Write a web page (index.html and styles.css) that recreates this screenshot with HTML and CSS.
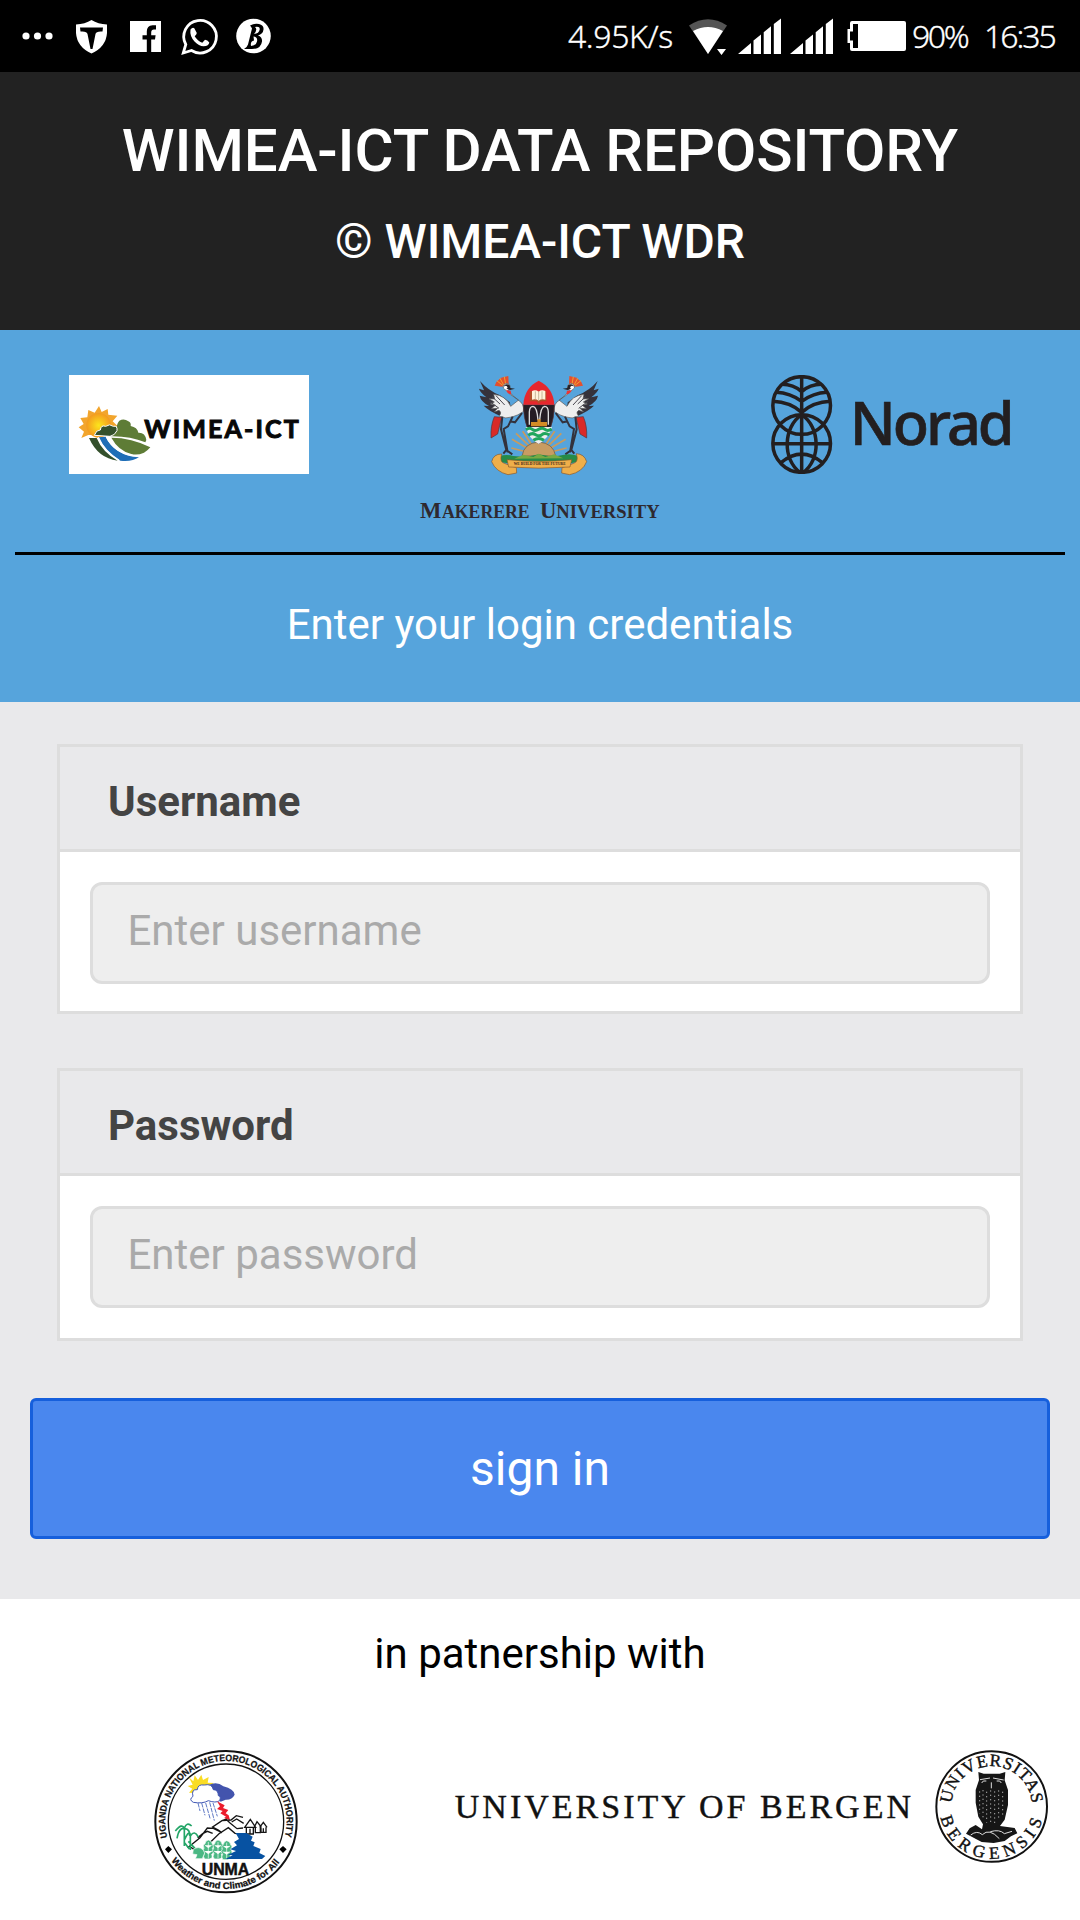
FILE: index.html
```html
<!DOCTYPE html>
<html lang="en">
<head>
<meta charset="utf-8">
<title>WIMEA-ICT Data Repository</title>
<link rel="stylesheet" href="styles.css">
</head>
<body>
<div class="status">
  <svg class="status-left" viewBox="0 0 280 72" width="280" height="72">
    <g fill="#fff">
      <circle cx="26" cy="36" r="3.6"/><circle cx="37.5" cy="36" r="3.6"/><circle cx="49" cy="36" r="3.6"/>
      <path d="M76 24.5Q85 24 91.500 20Q98 24 107 24.500V33Q106 47 91.500 53.500Q77 47 76 33Z"/>
      <path fill="#000" d="M80 27.500H103L102.500 31.500Q96 31 95.500 34L92.500 49H90.500L87.500 34Q87 31 80.500 31.500Z"/>
      <path d="M130 21H161V52H151.200V39.500H155L155.600 35.300H151.200V32.500Q151.200 29.500 154 29.500H156V25.200H152.500Q146.800 25.500 146.800 31.500V35.300H142.500V39.500H146.800V52H130Z"/>
      <path d="M190.500 29.500Q192.500 27 194.300 28.300L196.800 33Q196.500 35 194.700 36.300Q197.500 41 202.300 42.800L205 39.800Q207.500 40 209.300 42.500Q209 46 203.500 46.300Q199 46 194.500 41.500Q189.500 36 190.500 29.500Z"/>
      <circle cx="253.500" cy="36" r="17.300"/>
    </g>
    <path fill="none" stroke="#fff" stroke-width="2.800" stroke-linejoin="miter" d="M183.300 53L185.800 44.500A16.300 16.300 0 1 1 191.500 50.500Z"/>
    <g transform="translate(244 23.500)">
      <path d="M6 2Q11-.5 15 .500Q20 1.500 19.500 6Q19 10.500 14 12Q18.500 13.500 18 18Q17 25.500 8 25.500H0Q3 24 4 21L8 5Q7 3 6 2Z"/>
      <path fill="#fff" d="M11 3.500Q16 2.500 15.700 6Q15 10 10 10.500Q14 6 11 3.500ZM9.500 13Q14 13.500 13 18Q12 22.500 7 22.500Q6 18 10 17Z"/>
    </g>
  </svg>
  <span class="speed">4.95K/s</span>
  <svg class="signals" viewBox="689 0 218 72" width="218" height="72" fill="#fff">
    <path fill="#555" d="M689 25.500Q708 13 727 25.500L708 54Z"/>
    <path d="M693 31Q708 23 723 31L708 54ZM717 49H726L721.500 55Z"/>
    <g id="bars"><path d="M738 54L751 43V54ZM753.500 40.500L761 34.500V54H753.500ZM763.700 32.300L771 26.300V54H763.700ZM773.800 24L781 18.500V54H773.800Z"/></g>
    <use href="#bars" x="52"/>
    <path d="M852 21H904Q906 21 906 23V49Q906 51 904 51H852Q850 51 850 49V43H847.500V29H850V23Q850 21 852 21Z"/>
    <path fill="#000" d="M853 24H858V48H853V40.500H850V31.500H853Z"/>
  </svg>
  <span class="percent">90%</span>
  <span class="clock">16:35</span>
</div>

<header class="header">
  <h1>WIMEA-ICT DATA REPOSITORY</h1>
  <h2>© WIMEA-ICT WDR</h2>
</header>

<section class="banner">
  <div class="logos">
    <svg viewBox="57 45 720 297" width="240" height="99">
      <defs><radialGradient id="sun"><stop offset="0" stop-color="#fce51c"/><stop offset="1" stop-color="#f39a1f"/></radialGradient></defs>
      <path fill="#fff" d="M57 45H777V342H57Z"/>
      <path fill="#f2a52d" d="M147 138L155 156L173 147L175 164L202 167L188 184L202 197L185 208L180 225H115L94 234L102 215L86 202L101 192L91 174L112 172L115 150L134 158Z"/>
      <circle cx="146" cy="196" r="37" fill="url(#sun)"/>
      <path fill="#5e7c36" d="M183 229L201 211Q198 193 208 182Q222 174 235 184Q244 188 242 198Q262 202 265 218Q286 217 289 240L286 247Q240 228 183 229Z"/>
      <path fill="#5e7c36" d="M184 233Q245 233 301 262Q292 273 282 278Q262 287 244 282Q205 272 184 233Z"/>
      <path fill="#34502c" stroke="#fff" stroke-width="3" d="M133 226Q139 209 151 210Q153 194 167 199Q179 190 190 199Q203 196 201 212Q195 226 180 229Z"/>
      <path fill="#34502c" d="M117 234H140Q157 276 203 302Q144 295 117 234Z"/>
      <path fill="#1f6eb7" d="M145 232L167 230Q193 286 267 292Q246 306 211 302Q166 276 145 232Z"/>
      <path fill="none" stroke="#fff" stroke-width="4" d="M169 230Q192 277 250 287M145 232Q163 274 207 301"/>
      <text class="wimea-word" x="283" y="235" textLength="463">WIMEA-ICT</text>
    </svg>

    <svg class="crest" viewBox="30 45 720 432" width="240" height="144">
      <g stroke="#c99b5d" stroke-width="5"><path d="M386 285L304 264M386 285L306 238M386 285L318 220M386 285L338 214M386 285L470 264M386 285L467 238M386 285L454 220M386 285L434 214"/></g>
      <path fill="#c89c62" stroke="#654" stroke-width="2" d="M336 288Q342 249 386 246Q430 249 437 288Z"/>
      <g id="crane">
        <path fill="#e4502e" d="M275 80L254 77Q260 53 295 48L296 74Z"/>
        <path stroke="#f2a02f" stroke-width="3" d="M260 62L278 76M270 55L281 75M283 50L287 73"/>
        <path fill="#d92a28" stroke="#54343b" stroke-width="2" d="M253 170L275 172L263 222L243 234Q241 198 253 170Z"/>
        <path fill="#35323b" d="M210 63Q235 92 270 106L300 127L303 165L276 170Q236 153 221 137L237 138Q212 124 209 107L229 112Q208 94 207 86L222 91Z"/>
        <path fill="#eee" stroke="#555" stroke-width="2" d="M251 103Q287 106 302 139L326 120Q299 105 280 84Q278 71 291 70Q303 74 300 86L293 91Q305 105 324 120Q344 131 340 155Q324 166 306 171Q286 178 267 168Q277 158 267 151L252 156L263 145L244 146L256 136L241 132L253 126L237 116L254 117Z"/>
        <path d="M282 77Q290 69 299 76L301 84L315 86L300 90L286 84Z" fill="#26242b"/>
        <circle cx="287" cy="82" r="5" fill="#fff"/><path fill="#e33" d="M288 91L302 92L304 103Q293 103 288 91Z"/>
        <path fill="none" stroke="#33323c" stroke-width="6" d="M277 170L273 208L289 270L280 281M289 270L307 283M308 170L294 199L281 207L293 277M336 159L315 187L300 184"/>
        <path fill="none" stroke="#4b4951" stroke-width="3" d="M246 110L270 132M239 124L267 145M258 107L284 135"/>
      </g>
      <use href="#crane" transform="translate(773 0) scale(-1 1)"/>
      <path fill="#258b47" d="M247 303Q275 278 309 288L348 291L386 283L429 290L463 284Q498 278 526 302L480 310H295Z"/>
      <path fill="#78a943" d="M313 296L340 284L370 291L386 281L406 291L432 283L460 295Z"/>
      <path fill="#251d24" stroke="#57343a" stroke-width="2" d="M340 134H433Q433 215 386 252Q341 215 340 134Z"/>
      <path fill="#e7272d" d="M340 134Q343 83 386 62Q430 83 433 134Z"/>
      <path fill="#b45028" d="M359 94H409V124H393L386 132L380 124H359Z"/><path fill="#fff3da" d="M366 93Q377 88 386 95Q395 88 406 93V119Q395 115 386 122Q377 115 366 119Z"/>
      <path stroke="#a97" stroke-width="2" d="M386 95V121M376 94V118M396 94V118"/>
      <path fill="none" stroke="#ddd" stroke-width="4" d="M358 194V156Q359 139 369 139Q381 140 384 180M415 194V156Q414 139 404 139Q392 140 389 180"/>
      <path fill="#d48c26" d="M363 186H382V178H392V186H411V199H363Z"/>
      <path fill="#eee" d="M347 201H426Q416 235 386 252Q355 235 347 201Z"/>
      <path fill="none" stroke="#21a65d" stroke-width="9" d="M348 209Q359 201 367 208T386 208T405 208T425 207M355 226Q366 217 377 224T396 224T418 225M370 241Q386 230 402 241"/>
      <g fill="#efaf4a" stroke="#89572b" stroke-width="2"><path d="M275 282Q250 282 245 305Q257 335 294 344L320 339L319 323L283 310Q268 306 275 282ZM499 281Q523 282 530 305Q518 336 479 344L455 339L456 323L491 310Q507 305 499 281Z"/><path d="M291 299Q387 309 485 299L480 321Q386 328 296 321Z"/></g>
      <text class="motto" x="311" y="314" textLength="156" lengthAdjust="spacingAndGlyphs">WE BUILD FOR THE FUTURE</text>
      <text class="makerere" y="473"><tspan x="30" font-size="68">M</tspan><tspan x="96" font-size="57" textLength="263" lengthAdjust="spacingAndGlyphs">AKERERE</tspan><tspan x="390" font-size="68">U</tspan><tspan x="439" font-size="57" textLength="310" lengthAdjust="spacingAndGlyphs">NIVERSITY</tspan></text>
    </svg>

    <svg viewBox="63 45 720 297" width="240" height="99">
      <g fill="none" stroke="#231f20" stroke-width="10.500">
        <circle cx="155" cy="136.500" r="86.500"/>
        <circle cx="155" cy="250.500" r="86.500"/>
        <path d="M155 47V338M68 251H242M96 73Q130 73 155 95Q180 73 214 73M79 97Q120 99 155 124Q190 99 231 97M69 124Q120 126 155 157Q190 126 241 124M155 164C98 202 98 300 150 337M155 164C212 202 212 300 160 337M93 308Q155 257 217 308"/>
      </g>
      <text class="norad" x="299" y="256" textLength="495">Norad</text>
    </svg>
  </div>
  <hr>
  <p>Enter your login credentials</p>
</section>

<form class="form">
  <div class="card">
    <label for="username">Username</label>
    <div class="field"><input id="username" type="text" placeholder="Enter username"></div>
  </div>
  <div class="card card-last">
    <label for="password">Password</label>
    <div class="field"><input id="password" type="password" placeholder="Enter password"></div>
  </div>
  <button type="button">sign in</button>
</form>

<footer class="footer">
  <p>in patnership with</p>
  <div class="partners">
    <svg viewBox="42 32 432 432" width="144" height="144">
      <defs>
        <path id="unma-top" d="M82.200 294.100A182 182 0 1 1 433.800 294.100"/>
        <path id="unma-bottom" d="M93.700 364.300A202 202 0 0 0 422.300 364.300"/>
      </defs>
      <circle cx="258" cy="247" r="212" fill="#fff" stroke="#111" stroke-width="6"/>
      <circle cx="258" cy="247" r="173" fill="none" stroke="#111" stroke-width="4"/>
      <text class="ring"><textPath href="#unma-top" textLength="664" lengthAdjust="spacingAndGlyphs">UGANDA NATIONAL METEOROLOGICAL AUTHORITY</textPath></text>
      <path d="M85 320L96 330L85 341L75 330ZM429 320L440 330L429 341L418 330Z"/>
      <path fill="#fadc24" d="M146 113L160 126L164 108L174 122L184 106L189 122L206 113L203 130L222 131L190 150L160 161L147 160L157 148L143 140L158 136Z"/>
      <path fill="#4354ad" d="M205 138Q230 124 250 141Q282 149 284 166Q276 182 257 181L242 187L216 162Z"/>
      <path fill="#fff" stroke="#4057b4" stroke-width="3" d="M160 189Q145 181 159 171Q153 149 172 151Q173 134 193 137Q216 132 220 151Q235 151 235 169Q244 171 239 184Q227 192 205 184Q188 194 160 189Z"/>
      <path fill="none" stroke="#5f79c5" stroke-width="3" stroke-dasharray="14 3" d="M174 191L180 215M185 191L195 228M197 191L211 240M209 189L223 244M219 191L232 231"/>
      <path fill="#ec1c2c" d="M231 186L254 198L249 206L265 212L257 222L266 228L270 243L252 236L258 232L241 222L248 215L231 209L240 201Z"/>
      <path fill="none" stroke="#151515" stroke-width="4" d="M143 325L180 295L202 266L220 267L246 280L235 272L218 263L246 244L258 240L271 252L291 268L309 266M173 295L188 283L202 276L218 282M211 309L237 283L265 265L285 282L307 284M246 244L273 242L289 229L309 234M275 248L290 239L311 252M151 323L162 330"/>
      <g fill="none" stroke="#151515" stroke-width="4"><path d="M314 264L331 240L347 264ZM319 264V284H340V264M330 284V268M343 263L351 247L364 263M346 263V280H361V263M359 264L370 249L381 264M363 264V279H378V264M370 279V267"/></g>
      <g fill="none" stroke="#23a567" stroke-width="5"><path d="M133 320V266M106 275Q126 250 133 267Q140 246 155 260M111 297Q118 262 134 268Q151 270 149 290M115 280Q125 264 133 268M151 332V289M134 300Q148 269 152 289Q163 271 175 293M145 306L165 327M132 308L148 329"/></g>
      <g fill="#4bb884" stroke="#fff" stroke-width="2">
        <path id="bush" d="M205 302Q216 304 217 314Q225 320 217 328Q226 338 215 345Q220 357 208 359H194Q187 351 193 343Q184 335 192 327Q187 317 195 313Q196 304 205 302ZM205 308V357M195 318L205 325L215 318M193 335L205 343L216 335"/>
        <use href="#bush" x="29"/><use href="#bush" x="55" y="2"/><path d="M160 330Q175 319 189 331L194 341L187 358H166L171 346L158 344Z"/>
      </g>
      <path fill="#0752a2" d="M287 281H319L338 292L333 304L344 309L340 320L362 329L358 341L376 350L366 359H256L278 348L263 347L288 335L271 330L291 318L282 308L297 299Z"/>
      <text class="unma" x="185" y="406" textLength="143" lengthAdjust="spacingAndGlyphs">UNMA</text>
      <text class="ring"><textPath href="#unma-bottom" textLength="378" lengthAdjust="spacingAndGlyphs">Weather and Climate for All</textPath></text>
    </svg>
    <div class="bergen">
      <span>UNIVERSITY OF BERGEN</span>
      <svg viewBox="44 30 342 342" width="114" height="114">
        <defs>
          <path id="seal-top" d="M93.300 191A121 121 0 0 1 334.700 191"/>
          <path id="seal-bottom" d="M60.500 232A157 157 0 0 0 367.500 232"/>
        </defs>
        <circle cx="214" cy="199.500" r="166" fill="#fff" stroke="#111" stroke-width="6"/>
        <text class="seal"><textPath href="#seal-top" textLength="362">UNIVERSITAS</textPath></text>
        <text class="seal"><textPath href="#seal-bottom" textLength="418">BERGENSIS</textPath></text>
        <path fill="#161616" d="M174 96L190 101H238L255 96L253 121L263 150V195L253 239L239 258L283 264L291 280L272 289L253 303L220 309L184 306L137 281L148 265L166 255L185 268L188 253L174 230L166 188V150L176 120Z"/>
        <g fill="none" stroke="#ddd" stroke-width="3"><path d="M184 129Q187 120 198 123M229 123Q240 120 243 129M213 127V145M179 119L209 114M218 114L250 120M151 285Q170 270 186 284Q207 263 237 296M210 275Q238 267 252 281L275 274"/></g>
        <path fill="none" stroke="#aaa" stroke-width="3" stroke-dasharray="4 9" d="M178 154V220M188 150V238M199 155V248M211 151V250M223 154V250M235 151V240M247 155V225"/>
      </svg>
    </div>
  </div>
</footer>
</body>
</html>
```
FILE: styles.css
```css
* { box-sizing: border-box; }
body { margin: 0; width: 1080px; height: 1920px; overflow: hidden; background: #fff; font-family: Roboto, sans-serif; font-size: 42px; color: #000; }
svg { display: block; flex: none; }
h1, h2, p { margin: 0; }

.status { height: 72px; background: #000; color: #fff; display: flex; align-items: center; font: 300 32px/74px "Noto Sans", sans-serif; }
.status span { white-space: nowrap; -webkit-text-stroke: 0.3px #fff; }
.speed { margin-left: 288px; width: 121px; letter-spacing: -0.4px; }
.percent { margin-left: 5px; width: 72px; letter-spacing: -2.4px; }
.clock { letter-spacing: -2px; }

.header { height: 258px; background: #222; color: #fff; text-align: center; padding-top: 44px; }
.header h1 { font-size: 60px; font-weight: 500; line-height: 70px; letter-spacing: -0.1px; }
.header h2 { font-size: 48px; font-weight: 500; line-height: 56px; margin-top: 28px; letter-spacing: -0.06px; }

.banner { height: 372px; background: #56a4dc; color: #fff; padding: 45px 15px 0; text-align: center; }
.logos { height: 177px; padding: 0 54px; display: flex; justify-content: space-between; align-items: flex-start; }
.banner hr { margin: 0; border: 0; height: 3px; background: #000; }
.banner p { margin-top: 45px; line-height: 50px; }
.crest { overflow: visible; }
.wimea-word { font: 700 75px Lato, sans-serif; fill: #080808; stroke: #080808; stroke-width: 3px; }
.motto { font: bold 14px "Liberation Serif", serif; fill: #3d2516; }
.makerere { font-family: "Liberation Serif", serif; font-weight: bold; fill: #2e2930; }
.norad { font: 500 178px "Noto Sans", sans-serif; fill: #231f20; stroke: #231f20; stroke-width: 2px; }

.form { height: 897px; background: #e9e9eb; padding: 42px 30px 0; }
.card { margin: 0 27px 54px; height: 270px; border: 3px solid #ddd; background: #fff; }
.card-last { height: 273px; margin-bottom: 57px; }
.card label { display: block; height: 105px; padding: 4px 48px 0; line-height: 102px; font-weight: 700; color: #444; background: #e9e9eb; border-bottom: 3px solid #ddd; }
.field { padding: 30px 30px 0; }
.field input { display: block; width: 100%; height: 102px; border: 3px solid #ddd; border-radius: 12px; background: #eee; padding: 0 35px 5px 34.5px; font: 42px Roboto, sans-serif; }
.field input::placeholder { color: #aaa; opacity: 1; }
.form button { display: block; width: 100%; height: 141px; border: 3px solid #165fdc; border-radius: 6px; background: #4a87ee; color: #fff; font: 48px Roboto, sans-serif; padding: 0; }

.footer { height: 321px; padding-top: 30px; text-align: center; }
.footer > p { line-height: 50px; }
.partners { display: flex; justify-content: space-between; align-items: flex-start; padding: 71px 31px 0 154px; }
.bergen { display: flex; align-items: center; gap: 21px; }
.bergen span { font: 34px/40px "Liberation Serif", serif; letter-spacing: 3px; white-space: nowrap; color: #111; -webkit-text-stroke: 0.4px #111; }
.ring { font: bold 28px "Liberation Sans", sans-serif; fill: #111; stroke: #111; stroke-width: 0.8px; }
.unma { font: bold 50px "Liberation Sans", sans-serif; fill: #111; stroke: #111; stroke-width: 1.5px; }
.seal { font: 52px "Liberation Serif", serif; fill: #111; stroke: #111; stroke-width: 1.2px; }
```
